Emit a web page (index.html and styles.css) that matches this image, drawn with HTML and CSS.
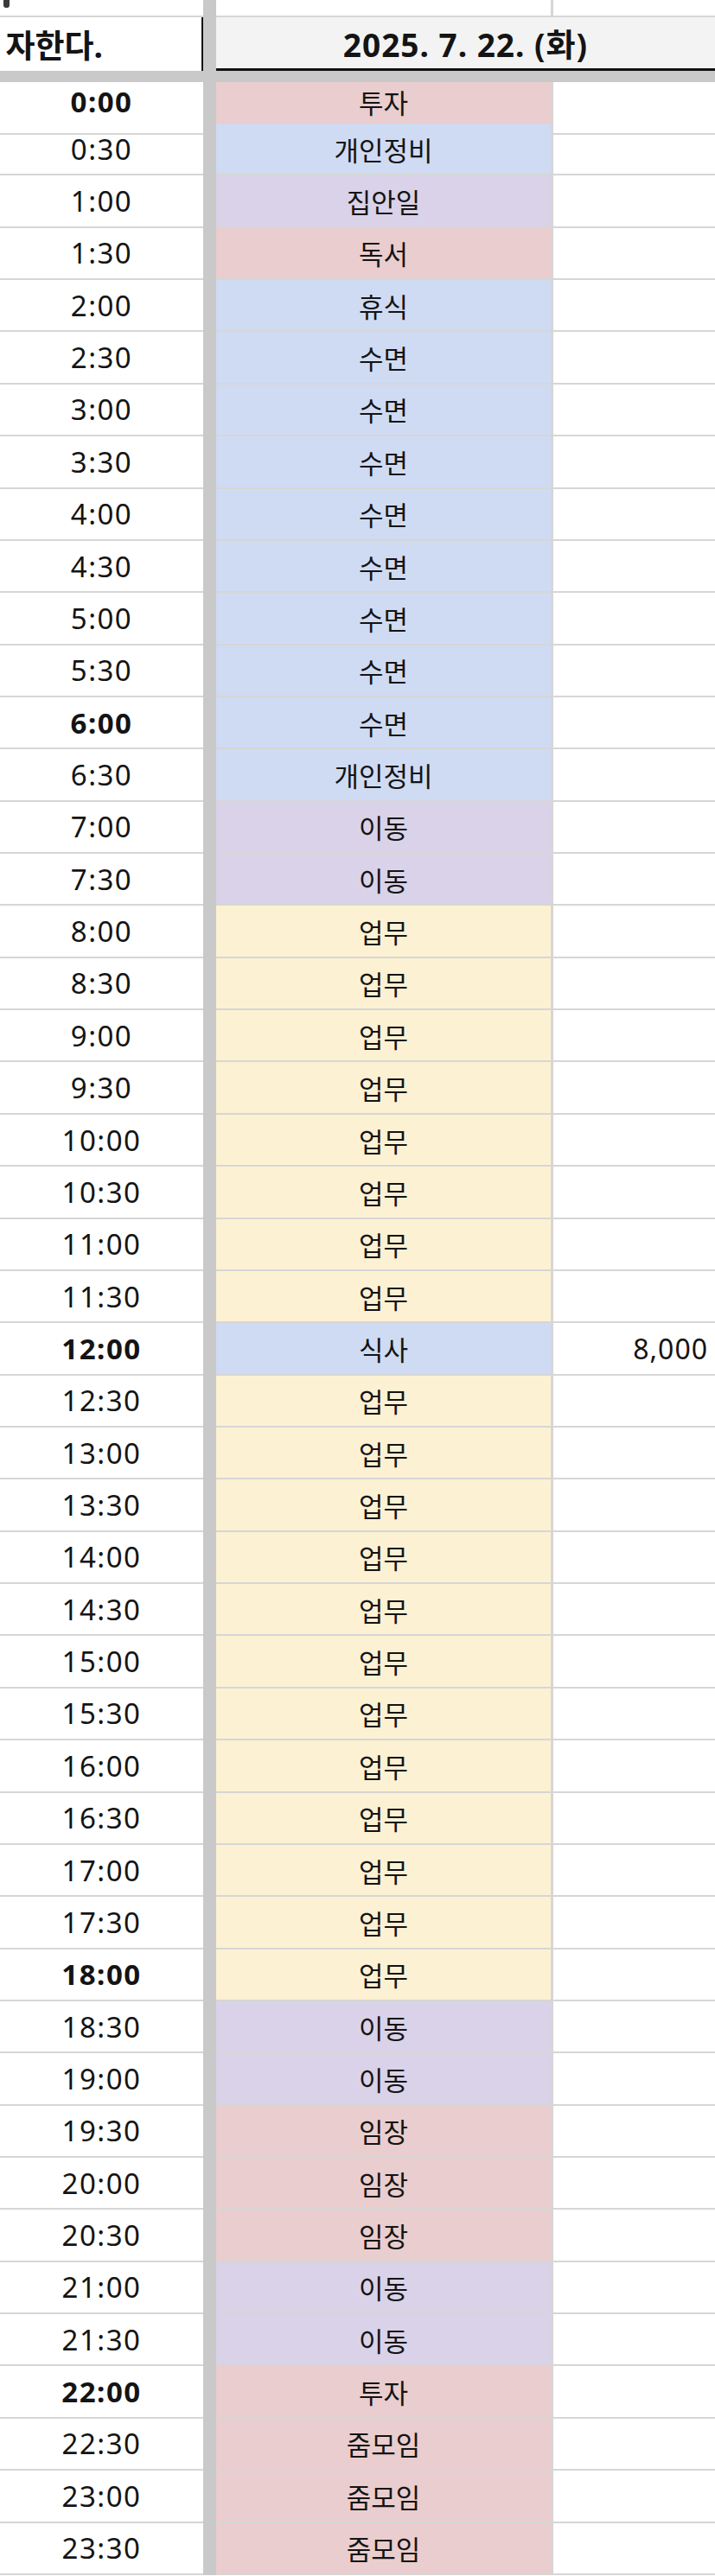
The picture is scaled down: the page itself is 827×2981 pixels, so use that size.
FILE: index.html
```html
<!DOCTYPE html>
<html lang="ko">
<head>
    <meta charset="UTF-8">
    <title>시간표</title>
    <link rel="stylesheet" href="styles.css">
</head>
<body>
    <div id="sheet">
        <div class="row top">
            <div class="a"><i class="mark"></i></div>
            <div class="band"></div>
            <div class="c"></div>
            <div class="d"></div>
        </div>
        <div class="row head">
            <div class="a"><span>자한다.</span></div>
            <div class="band"></div>
            <div class="title">2025. 7. 22. (화)</div>
        </div>
        <div class="hband"></div>
        <div id="list"></div>
    </div>
    <script>
        // 시간, 할일, 색, 굵게, 금액
        let data = [
            ["0:00","투자","pink",1],
            ["0:30","개인정비","blue"],
            ["1:00","집안일","purple"],
            ["1:30","독서","pink"],
            ["2:00","휴식","blue"],
            ["2:30","수면","blue"],
            ["3:00","수면","blue"],
            ["3:30","수면","blue"],
            ["4:00","수면","blue"],
            ["4:30","수면","blue"],
            ["5:00","수면","blue"],
            ["5:30","수면","blue"],
            ["6:00","수면","blue",1],
            ["6:30","개인정비","blue"],
            ["7:00","이동","purple"],
            ["7:30","이동","purple"],
            ["8:00","업무","yellow"],
            ["8:30","업무","yellow"],
            ["9:00","업무","yellow"],
            ["9:30","업무","yellow"],
            ["10:00","업무","yellow"],
            ["10:30","업무","yellow"],
            ["11:00","업무","yellow"],
            ["11:30","업무","yellow"],
            ["12:00","식사","blue",1,"8,000"],
            ["12:30","업무","yellow"],
            ["13:00","업무","yellow"],
            ["13:30","업무","yellow"],
            ["14:00","업무","yellow"],
            ["14:30","업무","yellow"],
            ["15:00","업무","yellow"],
            ["15:30","업무","yellow"],
            ["16:00","업무","yellow"],
            ["16:30","업무","yellow"],
            ["17:00","업무","yellow"],
            ["17:30","업무","yellow"],
            ["18:00","업무","yellow",1],
            ["18:30","이동","purple"],
            ["19:00","이동","purple"],
            ["19:30","임장","pink"],
            ["20:00","임장","pink"],
            ["20:30","임장","pink"],
            ["21:00","이동","purple"],
            ["21:30","이동","purple"],
            ["22:00","투자","pink",1],
            ["22:30","줌모임","pink"],
            ["23:00","줌모임","pink"],
            ["23:30","줌모임","pink"]
        ];
        let oList = document.getElementById("list"),
            html = "";

        data.forEach((item,index)=>{
            let cls = "row" + (index==0?" first":"");
            html += '<div class="'+cls+'">'
                + '<div class="a'+(item[3]?" b":"")+'">'+item[0]+'</div>'
                + '<div class="band"></div>'
                + '<div class="c '+item[2]+'">'+item[1]+'</div>'
                + '<div class="d">'+(item[4]||"")+'</div>'
                + '</div>';
        })
        oList.innerHTML = html;
    </script>
</body>
</html>
```

FILE: styles.css
```css
body{
    margin:0;
    background:#fff;
    font-family:"Noto Sans","Noto Sans CJK KR",sans-serif;
    color:#141414;
}
#sheet{
    width:827px;
    height:2981px;
    overflow:hidden;
}
.row{
    display:grid;
    grid-template-columns:235px 15px 390px 187px;
    height:60.36px;
    font-size:31px;
}
.row>div{
    box-sizing:border-box;
    display:flex;
    align-items:center;
    border-bottom:2px solid #d6d6d6;
}
.row .band{
    background:#c9c9c9;
    border-bottom:none;
}
.row .a{
    justify-content:center;
    font-size:33px;
    letter-spacing:1.5px;
}
.row .a.b{
    font-weight:bold;
}
.row .c{
    justify-content:center;
    border-right:3px solid #d6d6d6;
}
.row .d{
    justify-content:flex-end;
    padding-right:8px;
    font-size:32px;
    letter-spacing:1px;
}
.pink{background:#eacdce;}
.blue{background:#cfdbf3;}
.purple{background:#d9d2e8;}
.yellow{background:#fcf1d3;}

/* 윗줄 */
.row.top{
    height:20px;
}
.mark{
    display:block;
    align-self:flex-start;
    width:7px;
    height:9px;
    margin-left:4px;
    background:#3a3a3a;
    border-radius:0 0 3px 3px;
}
.row.top .a{
    align-items:flex-start;
    justify-content:flex-start;
}
/* 제목줄 */
.row.head{
    height:62px;
    grid-template-columns:235px 15px 577px;
    font-size:37px;
    font-weight:bold;
    letter-spacing:1px;
}
.row.head>div{
    border-bottom:none;
}
.row.head .a{
    justify-content:flex-end;
    padding-right:114px;
    border-right:2px solid #111;
    overflow:hidden;
    white-space:nowrap;
    font-size:37px;
    letter-spacing:0;
}
.row.head .title{
    justify-content:center;
    background:#f3f3f3;
    border-bottom:3px solid #111;
}
.hband{
    height:13px;
    background:#c9c9c9;
}
.row.first{
    height:48px;
}
.row.first>div{
    padding-bottom:14px;
}
.row.first .band{
    padding:0;
}
```
